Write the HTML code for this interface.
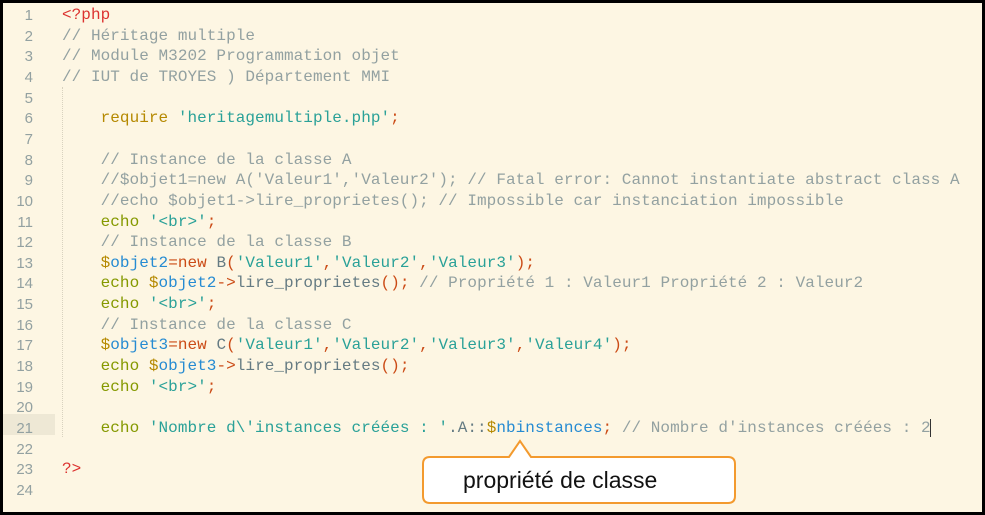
<!DOCTYPE html>
<html><head><meta charset="utf-8"><style>
html,body{margin:0;padding:0;}
body{width:985px;height:515px;overflow:hidden;background:#000;position:relative;}
#ed{position:absolute;left:3px;top:3px;width:979px;height:509px;background:#fdf6e3;}
.g{position:absolute;left:0;width:52px;height:20.65px;}
.n{position:absolute;left:0;width:30px;text-align:right;font:15px "Liberation Sans",sans-serif;color:#93a1a1;margin-top:1px;}
.l{position:absolute;left:59px;white-space:pre;font:16px "Liberation Mono",monospace;letter-spacing:0.05px;color:#657b83;margin-top:1px;}
.c{color:#93a1a1}.s{color:#2aa198}.k{color:#859900}.d{color:#b58900}.v{color:#268bd2}.r{color:#cb4b16}.p{color:#dc322f}
#guide{position:absolute;left:59px;top:84px;height:350px;border-left:1px dotted #d8d2bf;}
</style></head><body>
<div id="ed">
<div class="g" style="top:411px;background:#eee8d5"></div>
<div id="guide"></div>
<div class="n" style="top:3px">1</div><div class="l" style="top:2px"><span class="p">&lt;?php</span></div>
<div class="n" style="top:23.6px">2</div><div class="l c" style="top:22.6px">// Héritage multiple</div>
<div class="n" style="top:44.3px">3</div><div class="l c" style="top:43.3px">// Module M3202 Programmation objet</div>
<div class="n" style="top:65px">4</div><div class="l c" style="top:64px">// IUT de TROYES ) Département MMI</div>
<div class="n" style="top:85.6px">5</div>
<div class="n" style="top:106.2px">6</div><div class="l" style="top:105.2px">    <span class="d">require</span> <span class="s">'heritagemultiple.php'</span><span class="r">;</span></div>
<div class="n" style="top:126.9px">7</div>
<div class="n" style="top:147.5px">8</div><div class="l c" style="top:146.5px">    // Instance de la classe A</div>
<div class="n" style="top:168.2px">9</div><div class="l c" style="top:167.2px">    //$objet1=new A('Valeur1','Valeur2'); // Fatal error: Cannot instantiate abstract class A</div>
<div class="n" style="top:188.8px">10</div><div class="l c" style="top:187.8px">    //echo $objet1-&gt;lire_proprietes(); // Impossible car instanciation impossible</div>
<div class="n" style="top:209.5px">11</div><div class="l" style="top:208.5px">    <span class="k">echo</span> <span class="s">'&lt;br&gt;'</span><span class="r">;</span></div>
<div class="n" style="top:230.1px">12</div><div class="l c" style="top:229.1px">    // Instance de la classe B</div>
<div class="n" style="top:250.8px">13</div><div class="l" style="top:249.8px">    <span class="d">$</span><span class="v">objet2</span><span class="r">=new</span> B<span class="r">(</span><span class="s">'Valeur1'</span><span class="r">,</span><span class="s">'Valeur2'</span><span class="r">,</span><span class="s">'Valeur3'</span><span class="r">);</span></div>
<div class="n" style="top:271.4px">14</div><div class="l" style="top:270.4px">    <span class="k">echo</span> <span class="d">$</span><span class="v">objet2</span><span class="r">-&gt;</span>lire_proprietes<span class="r">();</span> <span class="c">// Propriété 1 : Valeur1 Propriété 2 : Valeur2</span></div>
<div class="n" style="top:292px">15</div><div class="l" style="top:291px">    <span class="k">echo</span> <span class="s">'&lt;br&gt;'</span><span class="r">;</span></div>
<div class="n" style="top:312.7px">16</div><div class="l c" style="top:311.7px">    // Instance de la classe C</div>
<div class="n" style="top:333.3px">17</div><div class="l" style="top:332.3px">    <span class="d">$</span><span class="v">objet3</span><span class="r">=new</span> C<span class="r">(</span><span class="s">'Valeur1'</span><span class="r">,</span><span class="s">'Valeur2'</span><span class="r">,</span><span class="s">'Valeur3'</span><span class="r">,</span><span class="s">'Valeur4'</span><span class="r">);</span></div>
<div class="n" style="top:354px">18</div><div class="l" style="top:353px">    <span class="k">echo</span> <span class="d">$</span><span class="v">objet3</span><span class="r">-&gt;</span>lire_proprietes<span class="r">();</span></div>
<div class="n" style="top:374.6px">19</div><div class="l" style="top:373.6px">    <span class="k">echo</span> <span class="s">'&lt;br&gt;'</span><span class="r">;</span></div>
<div class="n" style="top:395.3px">20</div>
<div class="n" style="top:415.9px">21</div><div class="l" style="top:414.9px">    <span class="k">echo</span> <span class="s">'Nombre d\'instances créées : '</span>.A::<span class="d">$</span><span class="v">nbinstances</span><span class="r">;</span> <span class="c">// Nombre d'instances créées : 2</span><span style="border-left:1px solid #333;margin-left:-1px"></span></div>
<div class="n" style="top:436.6px">22</div>
<div class="n" style="top:457.2px">23</div><div class="l" style="top:456.2px"><span class="p">?&gt;</span></div>
<div class="n" style="top:477.9px">24</div>
</div>
<svg style="position:absolute;left:0;top:0" width="985" height="515">
<path d="M430,457 L509,457 L520,441 L531,457 L728,457 Q735,457 735,464 L735,496 Q735,503 728,503 L430,503 Q423,503 423,496 L423,464 Q423,457 430,457 Z" fill="#fff" stroke="#f39a2e" stroke-width="2"/>
<text x="463" y="488" font-family="Liberation Sans, sans-serif" font-size="23" fill="#111">propriété de classe</text>
</svg>
</body></html>
